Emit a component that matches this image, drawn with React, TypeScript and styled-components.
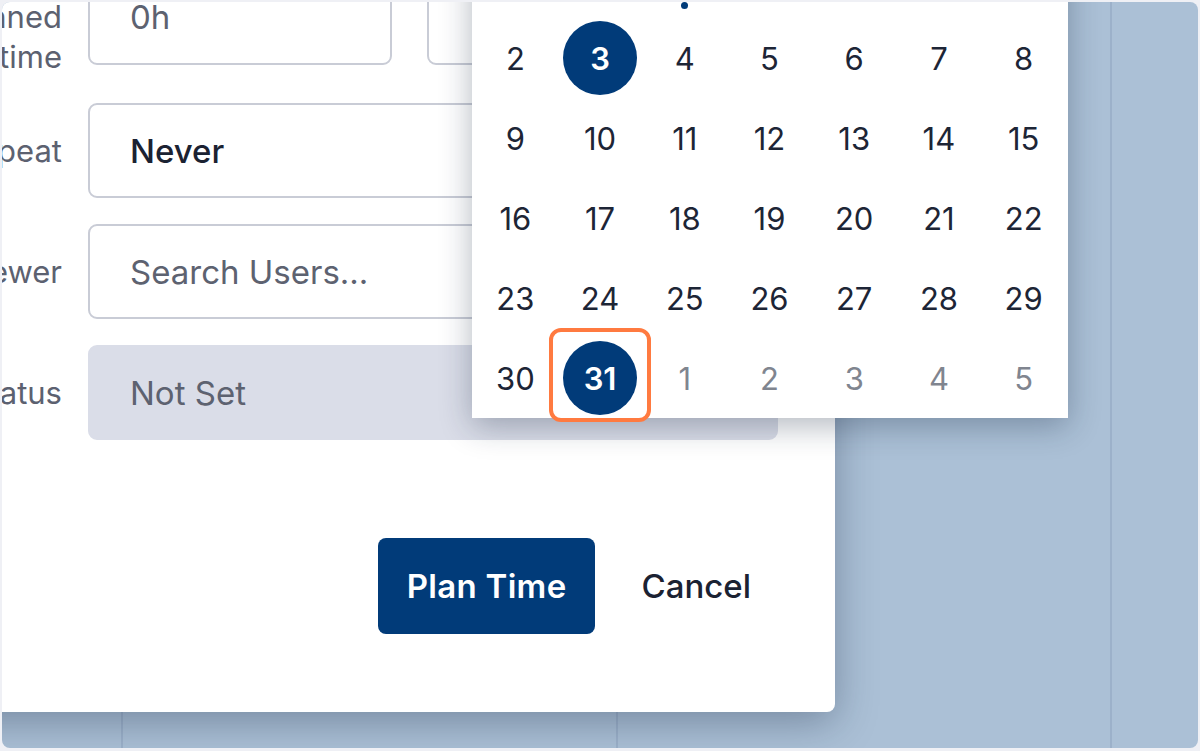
import React from "react";
import styled, { createGlobalStyle } from "styled-components";

const GlobalStyle = createGlobalStyle`
  html, body {
    margin: 0;
    padding: 0;
    background: #eff0f5;
  }
  body {
    font-family: Inter, "Noto Sans", sans-serif;
    -webkit-font-smoothing: antialiased;
  }
  *, *::before, *::after {
    box-sizing: border-box;
  }
`;

const Frame = styled.div`
  width: 1200px;
  height: 751px;
  padding: 2px 2px 3px 2px;
  background: #eff0f5;
`;

const Viewport = styled.div`
  position: relative;
  width: 1196px;
  height: 746px;
  border-radius: 8px;
  overflow: hidden;
  background-color: #abc0d6;
  background-image: linear-gradient(#9cb1ca, #9cb1ca), linear-gradient(#9cb1ca, #9cb1ca),
    linear-gradient(#9cb1ca, #9cb1ca);
  background-size: 2px 100%;
  background-position: 119px 0, 614px 0, 1108px 0;
  background-repeat: no-repeat;
  display: flex;
  align-items: flex-start;
`;

const Modal = styled.div`
  position: relative;
  flex: none;
  width: 975px;
  margin-left: -142px;
  margin-top: -88px;
  padding: 43px 57px 78px 40px;
  background: #ffffff;
  border-radius: 8px;
  box-shadow: 0 10px 40px rgba(20, 35, 60, 0.35);
  display: flex;
  flex-direction: column;
`;

const Form = styled.div`
  display: grid;
  grid-template-columns: 162px 690px;
  column-gap: 26px;
  row-gap: 26px;
  align-items: center;
`;

const Label = styled.div`
  font-size: 31px;
  line-height: 40px;
  color: #5c6170;
  text-align: right;
  white-space: nowrap;
`;

const Pair = styled.div`
  display: grid;
  grid-template-columns: 304px 1fr;
  column-gap: 35px;
`;

const Field = styled.div<{ $tone?: "value" | "muted"; $disabled?: boolean }>`
  height: 95px;
  border: 2px solid ${(p) => (p.$disabled ? "#dadde8" : "#c9ccd6")};
  background: ${(p) => (p.$disabled ? "#dadde8" : "#ffffff")};
  border-radius: 9px;
  padding: 0 40px;
  display: flex;
  align-items: center;
  font-size: 33px;
  font-weight: ${(p) => (p.$tone === "value" ? 500 : 400)};
  color: ${(p) => (p.$tone === "value" ? "#1b2232" : "#5d6270")};
  white-space: nowrap;
`;

const Actions = styled.div`
  margin-top: 98px;
  display: flex;
  justify-content: flex-end;
  gap: 19px;
`;

const Button = styled.button<{ $primary?: boolean }>`
  height: 96px;
  padding: 0 ${(p) => (p.$primary ? 29 : 27)}px;
  border: none;
  border-radius: 8px;
  font-family: inherit;
  font-size: 33px;
  letter-spacing: ${(p) => (p.$primary ? "0.3px" : "0")};
  font-weight: ${(p) => (p.$primary ? 600 : 500)};
  background: ${(p) => (p.$primary ? "#013b79" : "transparent")};
  color: ${(p) => (p.$primary ? "#ffffff" : "#1b2232")};
  cursor: pointer;
`;

const Popup = styled.div`
  position: absolute;
  left: 612px;
  top: 24px;
  width: 596px;
  padding: 0 2px 0 1px;
  background: #ffffff;
  box-shadow: 0 8px 30px rgba(20, 35, 60, 0.32);
  display: grid;
  grid-template-columns: repeat(7, 1fr);
  grid-auto-rows: 80px;
  z-index: 2;
`;

const Day = styled.div<{ $outside?: boolean }>`
  position: relative;
  display: flex;
  align-items: center;
  justify-content: center;
  font-size: 31px;
  color: ${(p) => (p.$outside ? "#80858f" : "#1d2536")};
`;

const Selected = styled.span`
  width: 74px;
  height: 74px;
  border-radius: 50%;
  background: #013b79;
  color: #ffffff;
  font-weight: 600;
  display: flex;
  align-items: center;
  justify-content: center;
`;

const TodayDot = styled.span`
  position: absolute;
  left: 50%;
  bottom: 9px;
  width: 7px;
  height: 7px;
  margin-left: -3.5px;
  border-radius: 50%;
  background: #013b79;
`;

const Highlight = styled.span`
  position: absolute;
  top: -10px;
  bottom: -4px;
  left: -9px;
  right: -9px;
  border: 4px solid #ff7a40;
  border-radius: 12px;
  pointer-events: none;
`;

type DayInfo = { n: number; outside?: boolean; selected?: boolean; today?: boolean; focus?: boolean };

const weeks: DayInfo[][] = [
  [
    { n: 25, outside: true },
    { n: 26, outside: true },
    { n: 27, outside: true, today: true },
    { n: 28, outside: true },
    { n: 29, outside: true },
    { n: 30, outside: true },
    { n: 1 },
  ],
  [{ n: 2 }, { n: 3, selected: true }, { n: 4 }, { n: 5 }, { n: 6 }, { n: 7 }, { n: 8 }],
  [{ n: 9 }, { n: 10 }, { n: 11 }, { n: 12 }, { n: 13 }, { n: 14 }, { n: 15 }],
  [{ n: 16 }, { n: 17 }, { n: 18 }, { n: 19 }, { n: 20 }, { n: 21 }, { n: 22 }],
  [{ n: 23 }, { n: 24 }, { n: 25 }, { n: 26 }, { n: 27 }, { n: 28 }, { n: 29 }],
  [
    { n: 30 },
    { n: 31, selected: true, focus: true },
    { n: 1, outside: true },
    { n: 2, outside: true },
    { n: 3, outside: true },
    { n: 4, outside: true },
    { n: 5, outside: true },
  ],
];

export default function App() {
  return (
    <>
      <GlobalStyle />
      <Frame>
        <Viewport>
          <Modal>
            <Form>
              <Label>
                Total
                <br />
                planned
                <br />
                time
              </Label>
              <Pair>
                <Field $tone="muted">0h</Field>
                <Field $tone="muted" />
              </Pair>

              <Label>Repeat</Label>
              <Field $tone="value">Never</Field>

              <Label>Reviewer</Label>
              <Field $tone="muted">Search Users...</Field>

              <Label>Status</Label>
              <Field $tone="muted" $disabled>
                Not Set
              </Field>
            </Form>

            <Actions>
              <Button $primary>Plan Time</Button>
              <Button>Cancel</Button>
            </Actions>

            <Popup>
              {weeks.map((week, wi) =>
                week.map((d, di) => (
                  <Day key={`${wi}-${di}`} $outside={d.outside}>
                    {d.selected ? <Selected>{d.n}</Selected> : d.n}
                    {d.today && <TodayDot />}
                    {d.focus && <Highlight />}
                  </Day>
                ))
              )}
            </Popup>
          </Modal>
        </Viewport>
      </Frame>
    </>
  );
}
